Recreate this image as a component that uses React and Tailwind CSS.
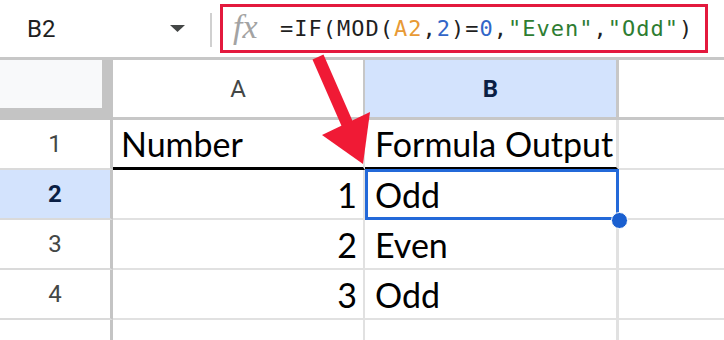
import React from "react";

const cellFont = { fontFamily: "Lato, 'Open Sans', sans-serif" };

function BodyRow({ num, a, b, selected, first, last }) {
  return (
    <div className="flex h-[50px]">
      <div
        className={`w-[113px] shrink-0 border-r-[3px] border-r-[#c4c4c4] border-b-2 border-b-[#dadada] flex items-center justify-center text-[24px] ${
          selected ? "bg-[#d3e3fd] text-[#0b1f44] font-bold" : "bg-white text-[#444746]"
        }`}
        style={{ fontFamily: "Roboto, Arial, sans-serif" }}
      >
        <span className={last ? "mt-[24px]" : ""}>{num}</span>
      </div>
      <div
        className={`w-[252px] shrink-0 border-r-2 border-r-[#e1e1e1] flex items-end justify-end pr-[6px] pb-[6px] text-[34px] leading-none text-black ${
          first ? "border-b-[3px] border-b-black justify-start pl-[8px]" : "border-b-2 border-b-[#e1e1e1]"
        }`}
        style={cellFont}
      >
        {a}
      </div>
      <div
        className={`relative w-[254px] shrink-0 border-r-[3px] border-r-[#e1e1e1] flex items-end pl-[10px] pb-[6px] text-[34px] leading-none text-black ${
          selected ? "z-10" : ""
        } ${first ? "border-b-[3px] border-b-black" : "border-b-2 border-b-[#e1e1e1]"}`}
        style={cellFont}
      >
        {b}
        {selected && (
          <>
            <div className="absolute left-0 top-[-1px] w-[254px] h-[51px] border-[3px] border-[#2369d9]" />
            <div className="absolute left-[246px] top-[42px] w-[17px] h-[17px] rounded-full bg-[#1a5fd0] border border-white" />
          </>
        )}
      </div>
      <div className="flex-1 border-b-2 border-b-[#e1e1e1] bg-white" />
    </div>
  );
}

export default function App() {
  return (
    <div className="relative w-[724px] h-[340px] overflow-hidden bg-white">
      {/* Top formula bar */}
      <div className="flex h-[60px] border-b-[3px] border-b-[#c7c7c7] bg-white">
        <div
          className="w-[210px] shrink-0 flex items-center pl-[27px] pr-[25px] justify-between text-[24px] text-[#1f1f1f]"
          style={{ fontFamily: "Roboto, Arial, sans-serif" }}
        >
          <span>B2</span>
          <svg width="15" height="7" viewBox="0 0 15 7">
            <polygon points="0,0 15,0 7.5,7" fill="#444746" />
          </svg>
        </div>
        <div className="w-[2px] h-[34px] mt-[13px] bg-[#d0d0d0]" />
        <div className="ml-[8px] mt-[4px] w-[488px] h-[49px] border-[3px] border-[#e3193d] flex items-center pl-[10px]">
          <span
            className="italic text-[34px] text-[#a3a3a3] leading-none w-[32px] mr-[15px] -mt-[4px]"
            style={{ fontFamily: "'Liberation Serif', serif" }}
          >
            fx
          </span>
          <span
            className="text-[22px] tracking-[1px] text-[#1f1f1f] whitespace-nowrap"
            style={{ fontFamily: "'DejaVu Sans Mono', 'Liberation Mono', monospace" }}
          >
            =IF(MOD(<span className="text-[#e89a35]">A2</span>,<span className="text-[#3266c8]">2</span>)=
            <span className="text-[#3266c8]">0</span>,<span className="text-[#2e7d32]">"Even"</span>,
            <span className="text-[#2e7d32]">"Odd"</span>)
          </span>
        </div>
      </div>

      {/* Column header row */}
      <div className="flex h-[60px]" style={{ fontFamily: "Roboto, Arial, sans-serif" }}>
        <div className="w-[113px] shrink-0 h-full bg-[#c4c4c4]">
          <div className="w-[102px] h-[48px] bg-[#f8f9fa]" />
        </div>
        <div className="w-[252px] shrink-0 border-r-2 border-b-[3px] border-[#c7c7c7] bg-white flex items-center justify-center text-[24px] text-[#444746]">
          A
        </div>
        <div className="w-[254px] shrink-0 border-r-[3px] border-b-[3px] border-[#c7c7c7] bg-[#d3e3fd] flex items-center justify-center text-[24px] font-bold text-[#0b1f44]">
          B
        </div>
        <div className="flex-1 border-b-[3px] border-[#c7c7c7] bg-white" />
      </div>

      <BodyRow num="1" a="Number" b="Formula Output" first />
      <BodyRow num="2" a="1" b="Odd" selected />
      <BodyRow num="3" a="2" b="Even" />
      <BodyRow num="4" a="3" b="Odd" />
      <BodyRow num="5" a="" b="" last />

      {/* Red arrow overlay */}
      <svg className="absolute left-0 top-0 pointer-events-none z-20" width="724" height="340" viewBox="0 0 724 340">
        <line x1="318" y1="57" x2="349" y2="128" stroke="#f01a35" strokeWidth="12" />
        <polygon points="322,135 370,112 363,164" fill="#f01a35" />
      </svg>
    </div>
  );
}
